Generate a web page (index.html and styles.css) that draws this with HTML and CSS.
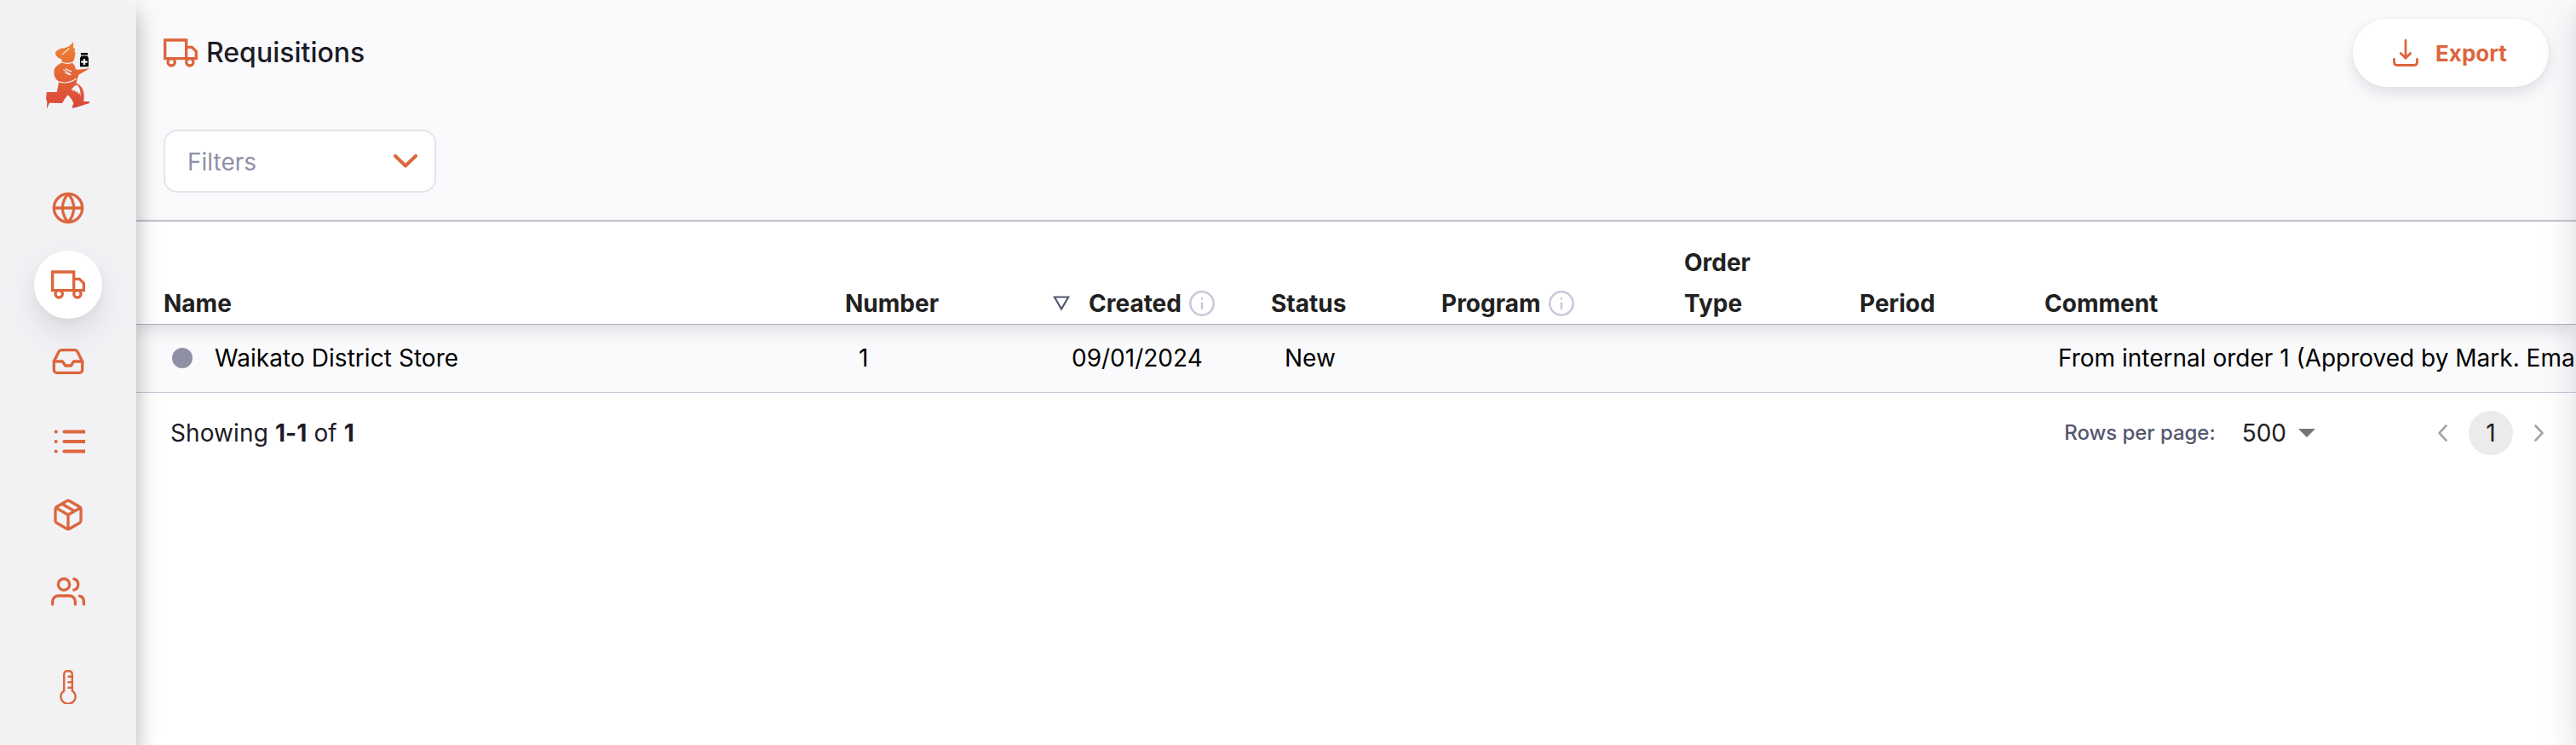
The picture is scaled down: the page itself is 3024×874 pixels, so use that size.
FILE: index.html
```html
<!DOCTYPE html>
<html lang="en">
<head>
<meta charset="utf-8">
<title>Requisitions</title>
<link rel="stylesheet" href="styles.css">
</head>
<body>
<nav class="sidebar">
  <svg class="logo" viewBox="150 140 180 250">
    <defs><linearGradient id="flame" x1="0" y1="0" x2="0" y2="1"><stop offset="0" stop-color="#ef8433"/><stop offset="1" stop-color="#d9453a"/></linearGradient></defs>
    <path fill="url(#flame)" d="M259 146C250 157 240 165 228 168C210 169 198 176 194 187C197 197 204 205 216 207L219 219C208 225 195 231 191 245C188 262 192 277 206 285L207 290L200 324L164 324L162 348L166 360L164 383L174 362L219 363C226 350 231 342 239 334C250 344 257 354 259 364L253 380C272 380 292 369 314 364L315 357L295 357C298 330 297 305 269 292L271 280L278 262L317 240L274 245L267 243C265 232 260 224 253 220C258 216 262 210 262 205L266 187L262 178L266 171L258 168Z"/>
    <path fill="none" stroke="#f2f2f5" stroke-width="3.5" stroke-linecap="round" d="M220 190L243 170M219 219C233 224 245 223 255 219M206 287C228 294 249 290 267 277M224 245L249 262M231 242L251 251M229 256L246 263"/>
    <path fill="#f2f2f5" d="M250 318Q258 303 271 298Q285 309 284 339L279 324L277 333L270 319L268 326L262 316L258 322L256 315Z"/>
    <path d="M285 185H309V193H285ZM287 196H307L312 203V234H282V203Z"/>
    <path stroke="#fff" stroke-width="7" d="M297 206V228M286 217H308"/>
  </svg>
  <a class="nav-item"><svg class="icon" viewBox="0 0 24 24"><circle cx="12" cy="12" r="10"/><path d="M2 12h20M12 2a15.3 15.3 0 0 1 4 10 15.3 15.3 0 0 1-4 10 15.3 15.3 0 0 1-4-10 15.3 15.3 0 0 1 4-10z"/></svg></a>
  <a class="nav-item active"><svg class="icon sharp" viewBox="0 0 24 24"><path d="M1 3h15v13H1zM16 8h4l3 3v5h-7z"/><circle cx="5.5" cy="18.5" r="2.5"/><circle cx="18.5" cy="18.5" r="2.5"/></svg></a>
  <a class="nav-item"><svg class="icon" viewBox="0 0 24 24"><path d="M22 12h-6l-2 3h-4l-2-3H2"/><path d="M5.45 5.11L2 12v6a2 2 0 0 0 2 2h16a2 2 0 0 0 2-2v-6l-3.45-6.89A2 2 0 0 0 16.76 4H7.24a2 2 0 0 0-1.79 1.11z"/></svg></a>
  <a class="nav-item list"><svg class="icon" viewBox="0 0 24 24"><path stroke-width="2.5" d="M9.3 5.1H26M9.3 12H26M9.3 18.9H26M3.4 5.1h.01M3.4 12h.01M3.4 18.9h.01"/></svg></a>
  <a class="nav-item"><svg class="icon" viewBox="0 0 24 24"><path d="M16.5 9.4l-9-5.19M21 16V8a2 2 0 0 0-1-1.73l-7-4a2 2 0 0 0-2 0l-7 4A2 2 0 0 0 3 8v8a2 2 0 0 0 1 1.73l7 4a2 2 0 0 0 2 0l7-4A2 2 0 0 0 21 16zM3.27 6.96L12 12.01l8.73-5.05M12 22.08V12"/></svg></a>
  <a class="nav-item"><svg class="icon" viewBox="0 0 24 24"><path d="M17 21v-2a4 4 0 0 0-4-4H5a4 4 0 0 0-4 4v2M23 21v-2a4 4 0 0 0-3-3.87M16 3.13a4 4 0 0 1 0 7.75"/><circle cx="9" cy="7" r="4"/></svg></a>
  <a class="nav-item thermo"><svg class="icon sharp" viewBox="0 0 40 40"><path stroke-width="2.4" d="M15.2 24.4V5.5Q15.2 1.2 19 1.2H21Q24.8 1.2 24.8 5.5V24.4A8.6 8.3 0 1 1 15.2 24.4ZM25 7.7H19.5M25 14.3H19.5M25 20.8H19.5"/></svg></a>
</nav>
<main class="main">
  <header class="top">
    <div class="title-bar">
      <svg class="icon sharp" viewBox="0 0 24 24"><path d="M1 3h15v13H1zM16 8h4l3 3v5h-7z"/><circle cx="5.5" cy="18.5" r="2.5"/><circle cx="18.5" cy="18.5" r="2.5"/></svg>
      <h1 class="title">Requisitions</h1>
      <button class="export"><svg class="download" viewBox="0 0 30 32"><path d="M15 1.5V22M9.3 16.5L15 22.3L20.7 16.5M1.5 23.5V27Q1.5 30.5 5 30.5H25Q28.5 30.5 28.5 27V23.5"/></svg>Export</button>
    </div>
    <div class="filters"><span>Filters</span><svg class="chevron" viewBox="0 0 28 16"><path d="M2 2L14 13.5L26 2"/></svg></div>
  </header>
  <section class="table">
    <div class="row head">
      <div>Name</div>
      <div>Number</div>
      <div class="created"><svg class="sort" viewBox="0 0 20 20"><path d="M1.8 1.5H18.2L10 15.5Z"/></svg>Created<svg class="info" viewBox="0 0 30 30"><circle cx="15" cy="15" r="13.7"/><path d="M15 14.5V21M15 9.3V9.5"/></svg></div>
      <div>Status</div>
      <div class="program">Program<svg class="info" viewBox="0 0 30 30"><circle cx="15" cy="15" r="13.7"/><path d="M15 14.5V21M15 9.3V9.5"/></svg></div>
      <div>Order<br>Type</div>
      <div>Period</div>
      <div>Comment</div>
    </div>
    <div class="row data">
      <div class="name"><span class="dot"></span>Waikato District Store</div>
      <div class="cell">1</div>
      <div class="date">09/01/2024</div>
      <div class="cell">New</div>
      <div></div>
      <div></div>
      <div></div>
      <div class="cell">From internal order 1 (Approved by Mark. Emai</div>
    </div>
  </section>
  <footer class="pager">
    <div class="showing">Showing <b>1-1</b> of <b>1</b></div>
    <div class="rows-label">Rows per page:</div>
    <div class="rows-value">500<span class="caret"></span></div>
    <svg class="arrow" viewBox="0 0 12 20"><path d="M10.5 1.5L2.5 10L10.5 18.5"/></svg>
    <div class="page">1</div>
    <svg class="arrow" viewBox="0 0 12 20"><path d="M1.5 1.5L9.5 10L1.5 18.5"/></svg>
  </footer>
</main>
<aside class="drawer-edge"></aside>
</body>
</html>
```
FILE: styles.css
```css
* { box-sizing: border-box; }

body {
  margin: 0;
  display: flex;
  width: 100%;
  height: 874px;
  overflow: hidden;
  background: #fff;
  color: #1c1c28;
  font: 28px/48px Inter, "Liberation Sans", sans-serif;
}

.sidebar {
  position: relative;
  z-index: 2;
  flex: 0 0 160px;
  display: flex;
  flex-direction: column;
  align-items: center;
  gap: 10px;
  padding-top: 47px;
  background: #f2f2f5;
  border-top-right-radius: 16px;
  box-shadow: 0 10px 10px -6px rgba(0,0,0,.2), 0 16px 20px 2px rgba(0,0,0,.14), 0 6px 28px 4px rgba(0,0,0,.12);
}

.logo { width: 60px; height: 83px; margin-bottom: 64px; flex: none; }

.nav-item {
  flex: none;
  display: flex;
  align-items: center;
  justify-content: center;
  width: 80px;
  height: 80px;
  border-radius: 50%;
}

.nav-item.active {
  background: #fff;
  box-shadow: 0 16px 32px rgba(96,97,112,.16), 0 4px 8px rgba(40,41,61,.04);
}

.nav-item.list { padding-top: 7px; }
.nav-item.thermo { margin-top: 22px; }

.icon {
  width: 40px;
  height: 40px;
  flex: none;
  fill: none;
  stroke: #dc663d;
  stroke-width: 2;
  stroke-linecap: round;
  stroke-linejoin: round;
}

.icon.sharp { stroke-linecap: butt; stroke-linejoin: miter; }

.main {
  flex: 1;
  min-width: 0;
  display: flex;
  flex-direction: column;
}

.top {
  height: 260px;
  padding: 22px 32px 0;
  background: #fafafc;
  border-bottom: 2px solid #c9c9d1;
}

.title-bar { display: flex; align-items: center; height: 80px; }

.title {
  flex: 1;
  margin: 0 0 0 10px;
  font-size: 32px;
  font-weight: 500;
}

.export {
  display: flex;
  align-items: center;
  gap: 20px;
  width: 230px;
  height: 80px;
  padding: 0 0 0 47px;
  border: 0;
  border-radius: 40px;
  background: #fff;
  color: #dc663d;
  font: 700 26px Inter, "Liberation Sans", sans-serif;
  box-shadow: 0 8px 16px rgba(96,97,112,.16), 0 0 4px rgba(40,41,61,.04);
}

.download, .chevron, .arrow { fill: none; stroke: #dc663d; stroke-linecap: round; stroke-linejoin: round; }
.download { width: 30px; height: 32px; stroke-width: 2.8; }
.chevron { width: 28px; height: 16px; stroke-width: 4; }

.filters {
  display: flex;
  align-items: center;
  justify-content: space-between;
  width: 320px;
  height: 74px;
  margin-top: 50px;
  padding: 0 20px 0 26px;
  border: 2px solid #e4e4eb;
  border-radius: 16px;
  background: #fff;
  color: #8f90a6;
}

.filters span { padding-top: 2px; }

.row {
  display: grid;
  grid-template-columns: 800px 245px 255px 200px 285px 206px 217px 1fr;
  padding-left: 32px;
  white-space: nowrap;
}

.head {
  position: relative;
  z-index: 1;
  align-items: end;
  height: 121px;
  border-bottom: 1px solid #b3b3c6;
  background: #fff;
  color: #212121;
  font-weight: 700;
  box-shadow: 0 8px 16px rgba(96,97,112,.16), 0 0 4px rgba(40,41,61,.04);
}

.created, .program { display: flex; align-items: center; }
.sort { width: 20px; height: 20px; margin: 2px 22px 0 -1px; fill: none; stroke: #555770; stroke-width: 2.2; }
.info { width: 30px; height: 30px; margin: 0 0 1px 9px; fill: none; stroke: #c7c9d9; stroke-width: 2.5; stroke-linecap: round; }

.data {
  align-items: center;
  height: 80px;
  padding-bottom: 1px;
  border-bottom: 1px solid #c7c9d9;
  background: #fafafc;
  color: #000;
}

.name { display: flex; align-items: center; letter-spacing: .05px; }
.dot { width: 24px; height: 24px; margin: 0 26px 0 10px; border-radius: 50%; background: #8f90a6; }
.cell { padding-left: 16px; min-width: 0; }
.date { padding-left: 21px; }

.pager {
  display: flex;
  align-items: center;
  height: 93px;
  padding: 0 37px 0 40px;
}

.showing { flex: 1; letter-spacing: .1px; }
.rows-label { color: #555770; font-size: 24px; font-weight: 500; letter-spacing: -.05px; }
.rows-value { display: flex; align-items: center; margin: 0 143px 0 31px; color: #212121; }
.caret { margin-left: 14px; border: 10px solid transparent; border-top-color: #757575; border-bottom: 0; }
.arrow { width: 12px; height: 20px; stroke: #a6a6a6; stroke-width: 2.6; }
.page { width: 52px; height: 52px; margin: 0 25px; border-radius: 50%; background: #ebebeb; color: #212121; line-height: 52px; text-align: center; }

.drawer-edge {
  position: absolute;
  z-index: 3;
  top: 0;
  left: 100%;
  width: 40px;
  height: 100%;
  box-shadow: 0 16px 40px 2px rgba(96,97,112,.18), 0 4px 8px rgba(40,41,61,.04);
}
```
